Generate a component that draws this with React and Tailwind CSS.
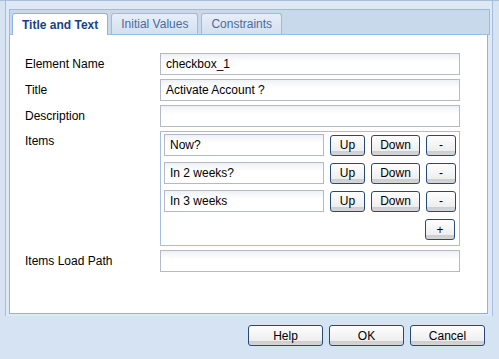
import React from "react";

const font = { fontFamily: '"Liberation Sans", Arial, sans-serif' };

function TextField({ value = "", className = "" }) {
  return (
    <div
      className={`h-[22px] border border-[#b5b8c8] bg-[linear-gradient(to_bottom,#eef1f4_0px,#ffffff_8px)] pl-[5px] text-[12px] leading-[20px] text-black ${className}`}
    >
      {value}
    </div>
  );
}

function Btn({ children, className = "" }) {
  return (
    <div
      className={`h-[21px] flex items-center justify-center rounded-[3px] border border-[#26497a] bg-[linear-gradient(to_bottom,#fefefe_0%,#eeeeee_78%,#cdcdcd_78%,#d6d6d6_100%)] text-[12px] text-black ${className}`}
    >
      {children}
    </div>
  );
}

function Row({ label, children, top = false }) {
  return (
    <div className={`flex ${top ? "items-start" : "items-center"}`}>
      <div className={`w-[135px] text-[12px] text-black ${top ? "pt-[1px] leading-[18px]" : "leading-[22px]"}`}>
        {label}
      </div>
      {children}
    </div>
  );
}

export default function App() {
  const items = ["Now?", "In 2 weeks?", "In 3 weeks"];
  const tabs = [
    { name: "Title and Text", active: true },
    { name: "Initial Values" },
    { name: "Constraints" },
  ];

  return (
    <div
      className="w-[499px] h-[359px] flex flex-col bg-[#d5e3f3] border-t border-[#a9bfd8] overflow-hidden"
      style={font}
    >
      {/* Window body */}
      <div className="flex flex-col h-[315px] ml-[5px] mr-[6px] border-l border-r border-[#a3bfe0] bg-[#dfe8f5] pt-[8px] pl-[3px] pr-[2px]">
        {/* Tab strip */}
        <div className="h-[26px] flex items-end gap-[3px] pl-[2px] border border-[#99bbe8] bg-[#c9d9ec]">
          {tabs.map((t) =>
            t.active ? (
              <div
                key={t.name}
                className="h-[22px] -mb-px px-[9px] flex items-center rounded-t-[3px] border border-b-0 border-[#8db2e3] bg-white text-[12px] font-bold text-[#15428b]"
              >
                {t.name}
              </div>
            ) : (
              <div
                key={t.name}
                className="h-[21px] px-[9px] flex items-center rounded-t-[3px] border border-b-0 border-[#99bbe8] bg-[linear-gradient(to_bottom,#e6eef8,#d3e0f1)] text-[12px] text-[#4a6b98]"
              >
                {t.name}
              </div>
            )
          )}
        </div>

        {/* Tab panel */}
        <div className="h-[279px] mr-[2px] border border-t-0 border-[#8db2e3] bg-white pl-[15px] pt-[18px] flex flex-col gap-[4px]">
          <Row label="Element Name">
            <TextField value="checkbox_1" className="w-[300px]" />
          </Row>
          <Row label="Title">
            <TextField value="Activate Account ?" className="w-[300px]" />
          </Row>
          <Row label="Description">
            <TextField className="w-[300px]" />
          </Row>
          <Row label="Items" top>
            <div className="w-[300px] h-[115px] border border-[#a3bde3] pl-[3px] pt-[2px] flex flex-col gap-[6px]">
              {items.map((it) => (
                <div key={it} className="flex items-center gap-[6px]">
                  <TextField value={it} className="w-[160px]" />
                  <Btn className="w-[35px]">Up</Btn>
                  <Btn className="w-[49px]">Down</Btn>
                  <Btn className="w-[30px]">-</Btn>
                </div>
              ))}
              <div className="flex justify-end pr-[4px] pt-[1px]">
                <Btn className="w-[30px]">+</Btn>
              </div>
            </div>
          </Row>
          <Row label="Items Load Path">
            <TextField className="w-[300px]" />
          </Row>
        </div>
      </div>

      {/* Button bar */}
      <div className="flex-1 flex justify-end items-start gap-[6px] pr-[14px] pt-[9px]">
        <Btn className="w-[75px]">Help</Btn>
        <Btn className="w-[75px]">OK</Btn>
        <Btn className="w-[75px]">Cancel</Btn>
      </div>
    </div>
  );
}
